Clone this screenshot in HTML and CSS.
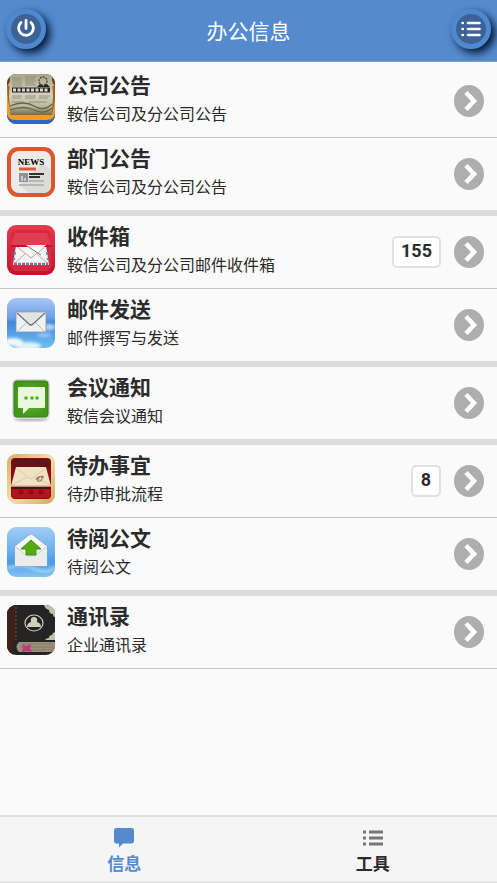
FILE: index.html
```
<!DOCTYPE html>
<html lang="zh-CN">
<head>
    <meta charset="UTF-8">
    <meta name="viewport" content="width=device-width, initial-scale=1.0">
    <title>办公信息</title>
    <link rel="stylesheet" href="styles.css">
</head>
<body>
    <!-- shared symbols -->
    <svg class="symbols" aria-hidden="true">
        <symbol id="arrow" viewBox="0 0 30 32">
            <ellipse cx="15" cy="16" rx="15" ry="16" fill="#aeaeae"/>
            <path d="M12 7.500l8 8.500-8 8.500" fill="none" stroke="#fff" stroke-width="4.6"/>
        </symbol>
        <symbol id="bars" viewBox="0 0 20 16">
            <path d="M0 2h3M0 8h3M0 14h3M6 2h14M6 8h14M6 14h14" fill="none" stroke="currentColor" stroke-width="3"/>
        </symbol>
        <linearGradient id="sky" x1="0" y1="0" x2="0" y2="1">
            <stop offset="0" stop-color="#a9c6f4"/>
            <stop offset=".4" stop-color="#6b9fe9"/>
            <stop offset=".48" stop-color="#4387dd"/>
            <stop offset="1" stop-color="#6fc0f0"/>
        </linearGradient>
        <linearGradient id="lightSky" x1="0" y1="0" x2="0" y2="1">
            <stop offset="0" stop-color="#a3ccf6"/>
            <stop offset=".5" stop-color="#67aeee"/>
            <stop offset=".7" stop-color="#4b9be4"/>
            <stop offset="1" stop-color="#83c4f2"/>
        </linearGradient>
        <linearGradient id="red" x1="0" y1="0" x2="0" y2="1">
            <stop offset="0" stop-color="#e8394e"/>
            <stop offset="1" stop-color="#c4122c"/>
        </linearGradient>
        <linearGradient id="paper" x1="0" y1="0" x2="0" y2="1">
            <stop offset="0" stop-color="#a9a48c"/>
            <stop offset=".5" stop-color="#d6d1bd"/>
            <stop offset=".8" stop-color="#bdb8a0"/>
            <stop offset="1" stop-color="#77765a"/>
        </linearGradient>
        <linearGradient id="gold" x1="0" y1="0" x2="1" y2="1">
            <stop offset="0" stop-color="#d6ad68"/>
            <stop offset=".5" stop-color="#f3dfa9"/>
            <stop offset="1" stop-color="#d4a75d"/>
        </linearGradient>
        <radialGradient id="green">
            <stop offset="0" stop-color="#68b92b"/>
            <stop offset="1" stop-color="#44961a"/>
        </radialGradient>
        <filter id="soft"><feGaussianBlur stdDeviation="1.5"/></filter>
        <clipPath id="tile"><rect width="48" height="50" rx="9"/></clipPath>
    </svg>

    <header class="header">
        <button class="round-btn" type="button" aria-label="退出">
            <svg width="20" height="20" viewBox="0 0 20 20" fill="none" stroke="#fff" stroke-width="2.8" stroke-linecap="round">
                <path d="M10 1.500v8M5 3.500a7.400 7.400 0 1 0 10 0"/>
            </svg>
        </button>
        <h1>办公信息</h1>
        <button class="round-btn" type="button" aria-label="菜单">
            <svg width="20" height="16" viewBox="0 0 20 16" fill="none" stroke="#fff" stroke-width="2.6" stroke-linecap="round">
                <path d="M1.600 2h.2M1.600 8h.2M1.600 14h.2M7 2h11.500M7 8h11.500M7 14h11.500"/>
            </svg>
        </button>
    </header>

    <main class="content">
        <ul class="list">
            <li>
                <a class="row" href="#notice">
                    <svg class="icon" viewBox="0 0 48 50">
                        <g clip-path="url(#tile)">
                            <rect width="48" height="50" fill="#5d3c22"/>
                            <path d="M0 34h48v16H0z" fill="#2f67b6"/>
                            <path d="M0 12l4-6h40l4 6v26q0 8-8 8H8q-8 0-8-8z" fill="#f09a2e"/>
                            <path d="M0 12h48v14l-3 15H4L1 26z" fill="#713b19" opacity=".6"/>
                            <path d="M3 0h42l1 24-1 10v6H3v-6L2 24z" fill="url(#paper)"/>
                            <path d="M5 4h10M5 6h10M5 8h10M5 10h10M5 12h10M18 3h11M18 5h10M18 7h11M18 9h9M18 11h11M5 22h10M5 24h9M18 22h11M18 24h10M32 22h11M32 24h9M5 28h12M22 28h18" stroke="#8a8571" stroke-width=".8"/>
                            <circle cx="36" cy="7" r="4" fill="none" stroke="#4a483d" stroke-width="1.3" stroke-dasharray="2 1"/>
                            <path d="M30 13l3-3 3 2 4-2 3 3z" fill="#222"/>
                            <path d="M5 16h38" stroke="#222" stroke-width="5"/>
                            <path d="M6 16h36" stroke="#dedbc8" stroke-width="3" stroke-dasharray="3 1.500"/>
                            <path d="M3 32q14-6 24 0t18-2M3 36q14-5 24 0t18-2" fill="none" stroke="#646647" stroke-width="1.3"/>
                        </g>
                    </svg>
                    <span class="text"><strong>公司公告</strong><small>鞍信公司及分公司公告</small></span>
                    <svg class="arrow"><use href="#arrow"/></svg>
                </a>
            </li>
            <li class="group-end">
                <a class="row" href="#department">
                    <svg class="icon" viewBox="0 0 48 50">
                        <rect width="48" height="50" rx="11" fill="#dc5730"/>
                        <rect x="4" y="4" width="40" height="42" rx="8" fill="#ecebe8"/>
                        <path d="M36 16l8 7v15q0 8-8 8H22L12 38z" fill="#dddcd9"/>
                        <text x="24" y="18" text-anchor="middle" class="news">NEWS</text>
                        <path d="M12 22h17" stroke="#df5a32" stroke-width="3"/>
                        <rect x="12" y="26" width="9" height="9" fill="#8d9499"/>
                        <path d="M14 34v-5h2v5M17 34v-3h2v3" fill="#c8cccf"/>
                        <path d="M22 27h15M22 30h11" stroke="#333" stroke-width="1.8"/>
                        <path d="M22 34h15M12 38h25" stroke="#b5b6b6" stroke-width="2"/>
                    </svg>
                    <span class="text"><strong>部门公告</strong><small>鞍信公司及分公司公告</small></span>
                    <svg class="arrow"><use href="#arrow"/></svg>
                </a>
            </li>
            <li>
                <a class="row" href="#inbox">
                    <svg class="icon" viewBox="0 0 48 50">
                        <rect width="48" height="50" rx="9" fill="url(#red)"/>
                        <rect x="4" y="5" width="40" height="41" rx="5" fill="#d52a42"/>
                        <path d="M8 18h32v22H8z" fill="#ae1029"/>
                        <path d="M9 20h30l3 20H6z" fill="#f5f4f2"/>
                        <path d="M9 21l15 12 15-12M7 39l12-11M41 39L29 28" fill="none" stroke="#aaa" stroke-width="1"/>
                        <path d="M7 39h34" stroke="#d7475a" stroke-width="2.4" stroke-dasharray="3 5"/>
                        <path d="M11 39h30" stroke="#4b8fc2" stroke-width="2.4" stroke-dasharray="3 5"/>
                        <path d="M8 27l-1 8M40 27l1 8" stroke="#4b8fc2" stroke-width="2" stroke-dasharray="3 3"/>
                        <path d="M8 8h32l4 12H4z" fill="#e13c50"/>
                        <path d="M4 20h40v2H4z" fill="#b91731"/>
                        <path d="M19 20h20l-9 8z" fill="#fff"/>
                        <path d="M20 21l14 9" stroke="#777"/>
                    </svg>
                    <span class="text"><strong>收件箱</strong><small>鞍信公司及分公司邮件收件箱</small></span>
                    <span class="count">155</span>
                    <svg class="arrow"><use href="#arrow"/></svg>
                </a>
            </li>
            <li class="group-end">
                <a class="row" href="#send">
                    <svg class="icon" viewBox="0 0 48 50">
                        <g clip-path="url(#tile)">
                            <rect width="48" height="50" fill="url(#sky)"/>
                            <g fill="#fff" filter="url(#soft)">
                                <ellipse cx="6" cy="44" rx="10" ry="4" opacity=".9"/>
                                <ellipse cx="21" cy="48" rx="13" ry="4" opacity=".8"/>
                                <ellipse cx="42" cy="29" rx="7" ry="3" opacity=".6"/>
                                <ellipse cx="37" cy="37" rx="7" ry="2" opacity=".4"/>
                            </g>
                        </g>
                        <rect x="9" y="14" width="30" height="20" fill="#f0f1f1" stroke="#8996a7" stroke-width=".8"/>
                        <path d="M10 34l11-11M38 34L27 23" stroke="#bbb" fill="none"/>
                        <path d="M10 15l12 11q2 2 4 0l12-11" fill="#e2e4e4" stroke="#6e7378" stroke-width="1.2"/>
                    </svg>
                    <span class="text"><strong>邮件发送</strong><small>邮件撰写与发送</small></span>
                    <svg class="arrow"><use href="#arrow"/></svg>
                </a>
            </li>
            <li class="group-end">
                <a class="row" href="#meeting">
                    <svg class="icon" viewBox="0 0 48 50">
                        <ellipse cx="24" cy="43" rx="17" ry="2" fill="#aaa" filter="url(#soft)"/>
                        <rect x="5" y="3" width="38" height="40" rx="5" fill="#d9d9d9"/>
                        <rect x="7" y="5" width="34" height="36" rx="3" fill="url(#green)" stroke="#367f15"/>
                        <path d="M12 11h25q1 0 1 1v19q0 1-1 1H22l-6 6v-6h-4q-1 0-1-1V12q0-1 1-1z" fill="#e8f8dc"/>
                        <g fill="#59aa2a">
                            <circle cx="19" cy="22" r="1.8"/>
                            <circle cx="25" cy="22" r="1.8"/>
                            <circle cx="30" cy="22" r="1.8"/>
                        </g>
                    </svg>
                    <span class="text"><strong>会议通知</strong><small>鞍信会议通知</small></span>
                    <svg class="arrow"><use href="#arrow"/></svg>
                </a>
            </li>
            <li>
                <a class="row" href="#todo">
                    <svg class="icon" viewBox="0 0 48 50">
                        <rect width="48" height="50" rx="9" fill="url(#gold)"/>
                        <rect x="4" y="4" width="40" height="41" rx="4" fill="#8c0c14"/>
                        <path d="M5 5h38v9H5z" fill="#681017"/>
                        <path d="M5 34h38v10H5z" fill="#b5141d"/>
                        <path d="M9 13h30l5 19H4z" fill="#f0e2c5"/>
                        <path d="M9 14l13 10q2 1 4 0l13-10M5 31l15-8M43 31l-15-8" fill="none" stroke="#dccba6"/>
                        <path d="M4 32h40" stroke="#d7bd89" stroke-width="1.5"/>
                        <path d="M5 34h38" stroke="#491016" stroke-width="2"/>
                        <path d="M29 26c2-5 7-4 6-1s-6 3-4 0 6-4 5-1" fill="none" stroke="#99815f" stroke-width="1.2"/>
                        <g fill="#8c0c14">
                            <circle cx="14" cy="38" r="2.500"/>
                            <circle cx="24" cy="38" r="2.500"/>
                            <circle cx="34" cy="38" r="2.500"/>
                        </g>
                    </svg>
                    <span class="text"><strong>待办事宜</strong><small>待办审批流程</small></span>
                    <span class="count">8</span>
                    <svg class="arrow"><use href="#arrow"/></svg>
                </a>
            </li>
            <li class="group-end">
                <a class="row" href="#documents">
                    <svg class="icon" viewBox="0 0 48 50">
                        <g clip-path="url(#tile)">
                            <rect width="48" height="50" fill="url(#lightSky)"/>
                            <path d="M0 41q15-5 28 1t20-2" fill="none" stroke="#b5ddf8" stroke-width="2" filter="url(#soft)"/>
                        </g>
                        <path d="M8 19L22 8q2-2 4 0l14 11v20H8z" fill="#f5f7f8" stroke="#83a5cc" stroke-width=".8"/>
                        <path d="M8 19l12 10h8l12-10v20H8z" fill="#ececec"/>
                        <path d="M9 20l11 9h8l11-9" fill="none" stroke="#ccd0d3"/>
                        <path d="M24 13l10 9h-5v6H19v-6h-5z" fill="#56aa13" stroke="#3e9310"/>
                    </svg>
                    <span class="text"><strong>待阅公文</strong><small>待阅公文</small></span>
                    <svg class="arrow"><use href="#arrow"/></svg>
                </a>
            </li>
            <li>
                <a class="row" href="#contacts">
                    <svg class="icon" viewBox="0 0 48 50">
                        <g clip-path="url(#tile)">
                            <rect width="48" height="50" fill="#242424"/>
                            <path d="M0 0h9v35q-4 2-4 8l2 7H0z" fill="#3d211a"/>
                            <path d="M9 2v33" stroke="#755044" stroke-dasharray="2 2"/>
                            <path d="M12 37h36v10H12q-5-5 0-10z" fill="#9c917a"/>
                            <path d="M14 39h32M13 42h33M14 45h32" stroke="#807460" stroke-width=".7"/>
                            <path d="M15 39l4 2 5-2-1 4 2 4-5-1-5 1 1-4z" fill="#c23880"/>
                            <path d="M37 0h11v12q-2 0-2-3-4 0-4-4-4-1-5-5zM48 27v8H38q1-2 4-2 0-3 3-3 0-2 3-3z" fill="#c3bfb0"/>
                        </g>
                        <ellipse cx="27" cy="18" rx="9" ry="8" fill="none" stroke="#d0cdbb" stroke-width="1.2"/>
                        <path d="M20 22q0-4 4-5-1-5 3-5t3 5q4 1 4 5z" fill="#d0cdbb"/>
                    </svg>
                    <span class="text"><strong>通讯录</strong><small>企业通讯录</small></span>
                    <svg class="arrow"><use href="#arrow"/></svg>
                </a>
            </li>
        </ul>
    </main>

    <nav class="tabs">
        <a class="active" href="#info">
            <svg width="20" height="20" viewBox="0 0 20 20"><path d="M2.500 0h15Q20 0 20 2.500v10q0 3-2.500 3H9L5 19.500v-4H2.500Q0 15.500 0 12.500v-10Q0 0 2.500 0z" fill="currentColor"/></svg>
            <span>信息</span>
        </a>
        <a href="#tools">
            <svg class="grey" width="20" height="20"><use href="#bars"/></svg>
            <span>工具</span>
        </a>
    </nav>
</body>
</html>
```

FILE: styles.css
```
* {
    box-sizing: border-box;
}

body {
    margin: 0;
    min-height: 100vh;
    display: flex;
    flex-direction: column;
    font-family: Roboto, "Noto Sans CJK SC", sans-serif;
    background-color: #fafafa;
    color: #2b2b2b;
}

.symbols {
    position: absolute;
    width: 0;
    height: 0;
}

.header {
    display: flex;
    justify-content: space-between;
    align-items: center;
    height: 62px;
    padding: 0 6px 4px;
    background-color: #558bce;
    border-bottom: 1px solid #7d9fd2;
}

.header h1 {
    margin: 0;
    padding-top: 6px;
    font-size: 21px;
    line-height: 28px;
    font-weight: 400;
    color: #fff;
}

.round-btn {
    display: flex;
    justify-content: center;
    align-items: center;
    width: 40px;
    height: 40px;
    padding: 0;
    border: 5px solid #4e88cf;
    border-radius: 50%;
    background-color: #3d6295;
    box-shadow: 4px 4px 9px #001633;
    cursor: pointer;
}

.content {
    flex: 1;
    padding-top: 3px;
}

.list {
    margin: 0;
    padding: 0;
    list-style: none;
}

.list li {
    border-bottom: 1px solid #c6c6c6;
}

.list .group-end {
    border-bottom: 6px solid #dcdcdc;
}

.row {
    display: flex;
    align-items: center;
    height: 72px;
    padding: 0 13px 0 7px;
    color: inherit;
    text-decoration: none;
}

.icon {
    width: 48px;
    height: 50px;
    margin: 0 12px 4px 0;
}

.news {
    font: bold 9px "Liberation Serif", serif;
}

.text {
    flex: 1;
    display: flex;
    flex-direction: column;
    margin-bottom: 4px;
}

.text strong {
    font-size: 21px;
    line-height: 32px;
}

.text small {
    font-size: 16px;
    line-height: 26px;
}

.count {
    min-width: 30px;
    height: 32px;
    margin-right: 13px;
    padding: 0 7px;
    border: 2px solid #e1e1e1;
    border-radius: 5px;
    background-color: #fff;
    font-size: 18px;
    line-height: 26px;
    font-weight: 700;
    text-align: center;
}

.arrow {
    width: 30px;
    height: 32px;
}

.tabs {
    display: flex;
    height: 68px;
    border-top: 2px solid #dfdfdf;
    border-bottom: 2px solid #e4e4e4;
    background-color: #f5f5f5;
}

.tabs a {
    flex: 1;
    display: flex;
    flex-direction: column;
    align-items: center;
    padding-top: 11px;
    font-size: 17px;
    line-height: 32px;
    font-weight: 700;
    color: #2b2b2b;
    text-decoration: none;
}

.tabs .active {
    color: #558bce;
}

.tabs .grey {
    color: #777;
}
```
